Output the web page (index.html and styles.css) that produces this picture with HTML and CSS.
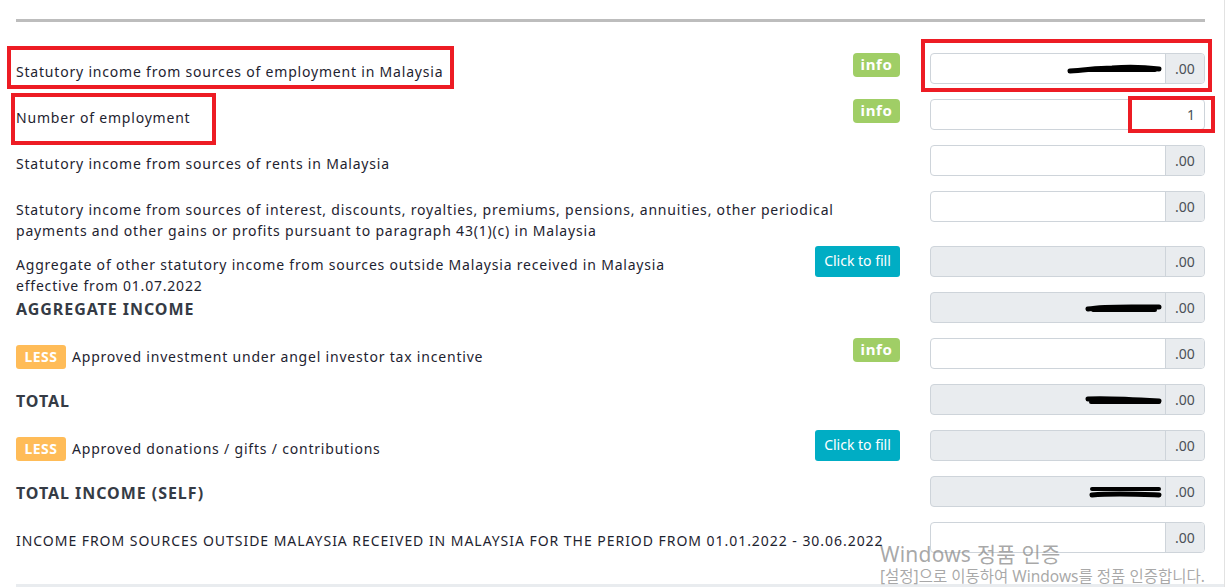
FILE: index.html
```html
<!DOCTYPE html>
<html>
<head>
<meta charset="utf-8">
<link rel="stylesheet" href="styles.css">
</head>
<body>
<div class="page">
  <div class="top-rule"></div>
  <div class="form">
    <div class="row">
      <div class="label">Statutory income from sources of employment in Malaysia</div>
      <div class="action"><span class="info">info</span></div>
      <div class="field"><div class="group"><div class="input"><svg class="redact" width="96" height="12" viewBox="0 0 96 12"><path d="M3 8 C20 7 30 5 45 5 C60 4 75 4 92 6" stroke="#000" stroke-width="5" fill="none" stroke-linecap="round"/><path d="M20 7 L88 7" stroke="#000" stroke-width="4" stroke-linecap="round"/></svg></div><span class="addon">.00</span></div></div>
    </div>
    <div class="row">
      <div class="label">Number of employment</div>
      <div class="action"><span class="info">info</span></div>
      <div class="field"><div class="input single">1</div></div>
    </div>
    <div class="row">
      <div class="label">Statutory income from sources of rents in Malaysia</div>
      <div class="action"></div>
      <div class="field"><div class="group"><div class="input"></div><span class="addon">.00</span></div></div>
    </div>
    <div class="row tall">
      <div class="label">Statutory income from sources of interest, discounts, royalties, premiums, pensions, annuities, other periodical<br>payments and other gains or profits pursuant to paragraph 43(1)(c) in Malaysia</div>
      <div class="action"></div>
      <div class="field"><div class="group"><div class="input"></div><span class="addon">.00</span></div></div>
    </div>
    <div class="row">
      <div class="label">Aggregate of other statutory income from sources outside Malaysia received in Malaysia<br>effective from 01.07.2022</div>
      <div class="action"><span class="fill">Click to fill</span></div>
      <div class="field"><div class="group ro"><div class="input"></div><span class="addon">.00</span></div></div>
    </div>
    <div class="row">
      <div class="label heading">AGGREGATE INCOME</div>
      <div class="action"></div>
      <div class="field"><div class="group ro"><div class="input"><svg class="redact" width="78" height="12" viewBox="0 0 78 12"><path d="M3 7 C20 4 40 5 74 5" stroke="#000" stroke-width="5" fill="none" stroke-linecap="round"/><path d="M8 8 L70 8" stroke="#000" stroke-width="4" stroke-linecap="round"/></svg></div><span class="addon">.00</span></div></div>
    </div>
    <div class="row">
      <div class="label"><span class="less">LESS</span>Approved investment under angel investor tax incentive</div>
      <div class="action"><span class="info">info</span></div>
      <div class="field"><div class="group"><div class="input"></div><span class="addon">.00</span></div></div>
    </div>
    <div class="row">
      <div class="label heading">TOTAL</div>
      <div class="action"></div>
      <div class="field"><div class="group ro"><div class="input"><svg class="redact tight" width="78" height="14" viewBox="0 0 78 14"><path d="M3 6 C20 5 40 6 74 8" stroke="#000" stroke-width="5" fill="none" stroke-linecap="round"/><path d="M6 9 L74 9" stroke="#000" stroke-width="4" stroke-linecap="round"/></svg></div><span class="addon">.00</span></div></div>
    </div>
    <div class="row">
      <div class="label"><span class="less">LESS</span>Approved donations / gifts / contributions</div>
      <div class="action"><span class="fill">Click to fill</span></div>
      <div class="field"><div class="group ro"><div class="input"></div><span class="addon">.00</span></div></div>
    </div>
    <div class="row">
      <div class="label heading">TOTAL INCOME (SELF)</div>
      <div class="action"></div>
      <div class="field"><div class="group ro"><div class="input"><svg class="redact" width="74" height="14" viewBox="0 0 74 14"><path d="M3 4 L70 4" stroke="#000" stroke-width="4" stroke-linecap="round"/><path d="M3 10 C25 8 45 9 70 10" stroke="#000" stroke-width="5" fill="none" stroke-linecap="round"/></svg></div><span class="addon">.00</span></div></div>
    </div>
    <div class="row">
      <div class="label caps">INCOME FROM SOURCES OUTSIDE MALAYSIA RECEIVED IN MALAYSIA FOR THE PERIOD FROM 01.01.2022 - 30.06.2022</div>
      <div class="action"></div>
      <div class="field"><div class="group"><div class="input"></div><span class="addon">.00</span></div></div>
    </div>
  </div>
  <div class="bottom-rule"></div>

  <div class="mark m1"></div>
  <div class="mark m2"></div>
  <div class="mark m3"></div>
  <div class="mark m4"></div>

  <div class="watermark">
    <div class="wm-title">Windows 정품 인증</div>
    <div class="wm-sub">[설정]으로 이동하여 Windows를 정품 인증합니다.</div>
  </div>
</div>
</body>
</html>
```
FILE: styles.css
```css
html, body {
  margin: 0;
  padding: 0;
  background: #fff;
}
.page {
  position: relative;
  width: 1224px;
  height: 587px;
  overflow: hidden;
  border-right: 1px solid #e2e2e2;
  font-family: "Noto Sans", "Noto Sans CJK KR", sans-serif;
  font-size: 14px;
  color: #1e2330;
}
.top-rule {
  margin: 19px 0 0 16px;
  width: 1189px;
  height: 3px;
  background: #bdbdbd;
}
.form {
  margin: 31px 0 0 16px;
  width: 1189px;
}
.row {
  display: flex;
  height: 31px;
  margin-bottom: 15px;
}
.row.tall {
  margin-bottom: 24px;
}
.label {
  flex: 1;
  padding-top: 8px;
  line-height: 21px;
  letter-spacing: 0.8px;
  white-space: nowrap;
}
.label.heading {
  font-weight: 700;
  font-size: 16px;
  color: #353b45;
  letter-spacing: 0.95px;
  padding-top: 7px;
}
.label.caps {
  letter-spacing: 0.96px;
}
.less {
  display: inline-block;
  vertical-align: middle;
  width: 50px;
  height: 24px;
  line-height: 24px;
  margin: -3px 6px 0 0;
  background: #ffbc58;
  color: #fff;
  font-weight: 700;
  font-size: 14px;
  letter-spacing: 0.5px;
  text-align: center;
  border-radius: 3px;
}
.action {
  flex: none;
  display: flex;
  justify-content: flex-end;
  align-items: flex-start;
}
.info {
  display: block;
  width: 47px;
  height: 24px;
  line-height: 23px;
  background: #a0ce66;
  color: #fff;
  font-weight: 700;
  font-size: 15px;
  letter-spacing: 0.6px;
  text-align: center;
  border-radius: 4px;
}
.fill {
  display: block;
  width: 85px;
  height: 31px;
  line-height: 30px;
  background: #00adc4;
  color: #fff;
  font-size: 14px;
  text-align: center;
  border-radius: 3px;
}
.field {
  flex: none;
  width: 275px;
  margin-left: 30px;
}
.group {
  display: flex;
  height: 31px;
  box-sizing: border-box;
  border: 1px solid #ced4da;
  border-radius: 4px;
  overflow: hidden;
  background: #fff;
}
.group.ro {
  background: #e9ecef;
}
.input {
  flex: 1;
  display: flex;
  justify-content: flex-end;
  align-items: center;
  padding-right: 2px;
}
.input.single {
  height: 31px;
  box-sizing: border-box;
  border: 1px solid #ced4da;
  border-radius: 4px;
  padding-right: 9px;
  color: #495057;
  font-size: 14px;
}
.redact {
  display: block;
  margin-top: 1px;
}
.addon {
  flex: none;
  width: 38px;
  border-left: 1px solid #ced4da;
  background: #e9ecef;
  color: #495057;
  font-size: 14px;
  line-height: 29px;
  text-align: center;
}
.bottom-rule {
  position: absolute;
  left: 16px;
  top: 584px;
  width: 1210px;
  height: 3px;
  background: #e9ecef;
}
.mark {
  position: absolute;
  box-sizing: border-box;
  border: 4px solid #ed1c24;
}
.m1 { left: 7px;   top: 46px; width: 447px; height: 43px; }
.m2 { left: 11px;  top: 93px; width: 205px; height: 52px; }
.m3 { left: 921px; top: 39px; width: 291px; height: 53px; }
.m4 { left: 1128px; top: 96px; width: 87px; height: 37px; }
.watermark {
  position: absolute;
  left: 880px;
  top: 541px;
  color: rgba(140, 140, 140, 0.75);
  font-family: "Noto Sans", "Noto Sans CJK KR", sans-serif;
  white-space: nowrap;
}
.wm-title {
  font-size: 21px;
  line-height: 26px;
  letter-spacing: 0.2px;
}
.wm-sub {
  font-size: 15.5px;
  line-height: 19px;
}
```
